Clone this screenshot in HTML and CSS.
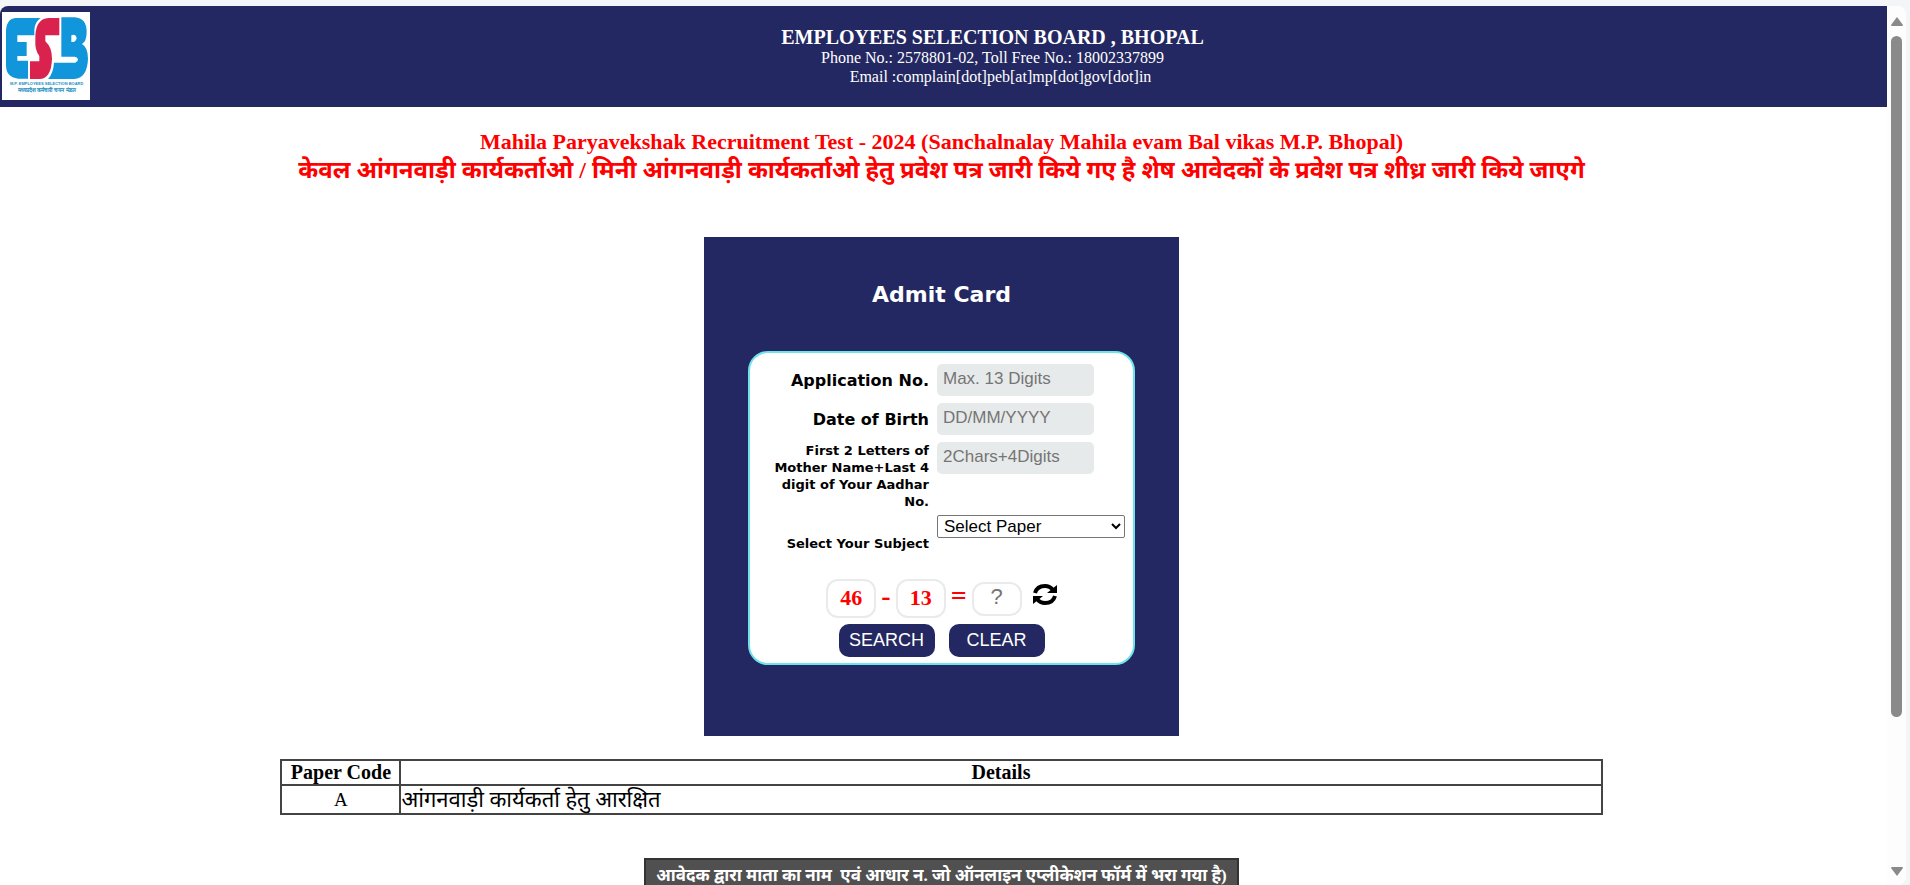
FILE: index.html
```
<!DOCTYPE html>
<html lang="en">
<head>
    <meta charset="UTF-8">
    <meta name="viewport" content="width=device-width, initial-scale=1.0">
    <title>Admit Card</title>
    <link rel="stylesheet" href="styles.css">
</head>
<body>
    <div class="page">
        <header class="header">
            <svg class="logo" viewBox="6 36 264 264" role="img" aria-label="ESB logo">
                <rect x="6" y="36" width="264" height="264" fill="#fff"/>
                <path fill="#1296db" d="M46 54H122Q104 66 103 90V106H52V126H80V168H52V182H84V236H54Q18 232 18 196V90Q20 56 46 54Z"/>
                <path fill="#d9234e" d="M178 54V106H136V124Q156 142 156 176Q154 236 118 237H90V184H118V168Q104 150 106 120Q104 56 146 54Z"/>
                <path fill="#1296db" d="M184 52H224Q260 54 260 96Q260 124 246 132Q264 142 264 176Q262 234 222 237H144Q160 220 162 188H226Q234 186 234 178Q232 170 224 170H184ZM214 106V126H222Q230 122 230 114Q228 104 220 104Z" fill-rule="evenodd"/>
                <text x="140" y="256" class="logo-text">M.P. EMPLOYEES SELECTION BOARD</text>
                <text x="140" y="275" class="logo-text logo-hindi">मध्यप्रदेश कर्मचारी चयन मंडल</text>
            </svg>
            <div class="header-text">
                <h1>EMPLOYEES SELECTION BOARD , BHOPAL</h1>
                <p>Phone No.: 2578801-02, Toll Free No.: 18002337899</p>
                <p>&nbsp;&nbsp;&nbsp;&nbsp;Email :complain[dot]peb[at]mp[dot]gov[dot]in</p>
            </div>
        </header>

        <main class="content">
            <h2 class="exam-title">Mahila Paryavekshak Recruitment Test - 2024 (Sanchalnalay Mahila evam Bal vikas M.P. Bhopal)</h2>
            <p class="exam-notice" lang="hi">केवल आंगनवाड़ी कार्यकर्ताओ / मिनी आंगनवाड़ी कार्यकर्ताओ हेतु प्रवेश पत्र जारी किये गए है शेष आवेदकों के प्रवेश पत्र शीध्र जारी किये जाएगे</p>

            <section class="card">
                <h2>Admit Card</h2>
                <form class="form">
                    <div class="fields">
                        <label for="appNo">Application No.</label>
                        <input type="text" id="appNo" placeholder="Max. 13 Digits" maxlength="13">

                        <label for="dob">Date of Birth</label>
                        <input type="text" id="dob" placeholder="DD/MM/YYYY">

                        <label for="aadhar" class="small">First 2 Letters of Mother Name+Last 4 digit of Your Aadhar No.</label>
                        <input type="text" id="aadhar" placeholder="2Chars+4Digits">

                        <label for="paper" class="small subject">Select Your Subject</label>
                        <select id="paper">
                            <option>Select Paper</option>
                            <option>A</option>
                        </select>
                    </div>

                    <div class="captcha">
                        <span class="num">46</span>
                        <span class="op">-</span>
                        <span class="num">13</span>
                        <span class="op">=</span>
                        <input type="text" class="answer" placeholder="?" aria-label="Answer">
                        <button type="button" class="refresh" aria-label="Refresh">
                            <svg viewBox="0 0 24 21">
                                <path fill="none" stroke="#000" stroke-width="4" d="M2 9Q4 2 12 2Q17 2 20 6M22 12Q20 19 12 19Q7 19 4 15"/>
                                <path d="M24 1V9H14ZM0 20V12H10Z"/>
                            </svg>
                        </button>
                    </div>

                    <div class="buttons">
                        <button type="button">SEARCH</button>
                        <button type="reset">CLEAR</button>
                    </div>
                </form>
            </section>

            <table class="papers">
                <thead>
                    <tr>
                        <th class="code">Paper Code</th>
                        <th>Details</th>
                    </tr>
                </thead>
                <tbody>
                    <tr>
                        <td class="code">A</td>
                        <td class="details" lang="hi">आंगनवाड़ी कार्यकर्ता हेतु आरक्षित</td>
                    </tr>
                </tbody>
            </table>

            <div class="note" lang="hi">आवेदक द्वारा माता का नाम&nbsp; एवं आधार न. जो ऑनलाइन एप्लीकेशन फॉर्म में भरा गया है)</div>
        </main>
    </div>

    <div class="scrollbar" aria-hidden="true">
        <svg viewBox="0 0 12 9"><path d="M6 0L12 8Q12 9 11 9H1Q0 9 0 8Z"/></svg>
        <div class="track"><div class="thumb"></div></div>
        <svg viewBox="0 0 12 9"><path d="M6 9L12 1Q12 0 11 0H1Q0 0 0 1Z"/></svg>
    </div>
</body>
</html>
```
FILE: styles.css
```
* {
    box-sizing: border-box;
}
body {
    margin: 0;
    padding: 6px 4px 0 0;
    height: 100vh;
    display: flex;
    overflow: hidden;
    background-color: #f4f5f7;
    font-family: "Liberation Serif", "Times New Roman", "Noto Sans", serif;
    color: #000;
}
h1, h2, p {
    margin: 0;
}

/* header */
.page {
    flex: 1;
    overflow: hidden;
    background-color: #fff;
    border-top-left-radius: 8px;
}
.header {
    display: flex;
    align-items: center;
    padding: 6px 2px 7px;
    background-color: #242862;
    color: #fff;
}
.logo {
    width: 88px;
    height: 88px;
    flex: none;
}
.logo-text {
    font: bold 12px "Liberation Sans", sans-serif;
    fill: #1a8fc0;
    text-anchor: middle;
}
.logo-hindi {
    font-size: 17px;
}
.header-text {
    flex: 1;
    padding-left: 10px;
    text-align: center;
    font-size: 16px;
    line-height: 19px;
}
.header-text h1 {
    font-size: 20px;
    line-height: 22px;
}

/* content */
.content {
    display: flex;
    flex-direction: column;
    align-items: center;
    padding: 22px 4px 0 0;
}
.exam-title {
    font-size: 22px;
    line-height: 26px;
    color: #f00;
}
.exam-notice {
    font-size: 24px;
    line-height: 30px;
    font-weight: bold;
    color: #f00;
}

.card {
    width: 475px;
    margin-top: 52px;
    padding: 42px 44px 71px;
    background-color: #242862;
    font-family: "DejaVu Sans", Verdana, sans-serif;
}
.card h2 {
    margin-bottom: 40px;
    text-align: center;
    font-size: 22px;
    line-height: 32px;
    color: #fff;
}
.form {
    padding: 11px 8px 6px;
    background-color: #fff;
    border: 2px solid #6fe3ea;
    border-radius: 20px;
}
.fields {
    display: grid;
    grid-template-columns: 171px 1fr;
    column-gap: 8px;
    row-gap: 5px;
    align-items: start;
}
.fields label {
    text-align: right;
    font-size: 16px;
    font-weight: bold;
    line-height: 34px;
}
.fields label.small {
    font-size: 13px;
    line-height: 17px;
}
.fields label.subject {
    padding-top: 20px;
}
.fields input {
    width: 157px;
    height: 32px;
    padding: 0 6px 2px;
    border: none;
    border-radius: 5px;
    background-color: #e7eaea;
    font: 17px "Liberation Sans", Arial, sans-serif;
}
.fields select {
    width: 188px;
    height: 23px;
    border: 1px solid #767676;
    border-radius: 2px;
    padding: 0 2px;
    background-color: #fff;
    font: 17px "Liberation Sans", Arial, sans-serif;
}
input::placeholder {
    color: #757575;
}

.captcha {
    display: flex;
    justify-content: center;
    align-items: center;
    gap: 5px;
    margin-top: 27px;
    font-family: "Liberation Serif", "Times New Roman", serif;
    font-size: 22px;
    font-weight: bold;
    color: #f00;
}
.num, .answer {
    width: 50px;
    border: 2px solid #eaeaec;
    border-radius: 12px;
    text-align: center;
}
.num {
    height: 39px;
    line-height: 34px;
}
.op {
    padding-bottom: 5px;
    font-size: 28px;
    line-height: 34px;
}
.answer {
    height: 34px;
    padding: 0 2px 4px;
    font: 22px "Liberation Sans", Arial, sans-serif;
}
.refresh {
    margin-left: 6px;
    padding: 0 0 8px;
    border: none;
    background: none;
}
.refresh svg {
    display: block;
    width: 24px;
    height: 21px;
}

.buttons {
    display: flex;
    justify-content: center;
    gap: 14px;
    margin-top: 6px;
}
.buttons button {
    width: 96px;
    height: 33px;
    padding: 0 0 1px;
    border: none;
    border-radius: 10px;
    background-color: #242862;
    color: #fff;
    font: 18px "Liberation Sans", Arial, sans-serif;
}

/* paper list */
.papers {
    width: calc(70% + 4px);
    margin-top: 23px;
    border-collapse: collapse;
    font-size: 20px;
}
.papers th, .papers td {
    padding: 0;
    border: 2px solid #444;
    line-height: 23px;
}
.papers .code {
    width: 119px;
    text-align: center;
}
.papers td.code {
    font-size: 19px;
}
.papers .details {
    font-size: 22px;
    line-height: 27px;
}
.note {
    margin-top: 43px;
    padding: 4px 10px;
    border: 2px solid #333;
    background-color: #505050;
    color: #fff;
    font-size: 17px;
    font-weight: bold;
    line-height: 24px;
}

/* scrollbar */
.scrollbar {
    flex: none;
    width: 19px;
    display: flex;
    flex-direction: column;
    align-items: center;
    gap: 10px;
    padding: 11px 0 9px;
    background-color: #fdfdfd;
    border-radius: 0 8px 8px 0;
}
.scrollbar svg {
    width: 12px;
    height: 9px;
    fill: #8a8a8a;
}
.track {
    flex: 1;
}
.thumb {
    width: 11px;
    height: 83%;
    border-radius: 6px;
    background-color: #8a8a8a;
}
```
